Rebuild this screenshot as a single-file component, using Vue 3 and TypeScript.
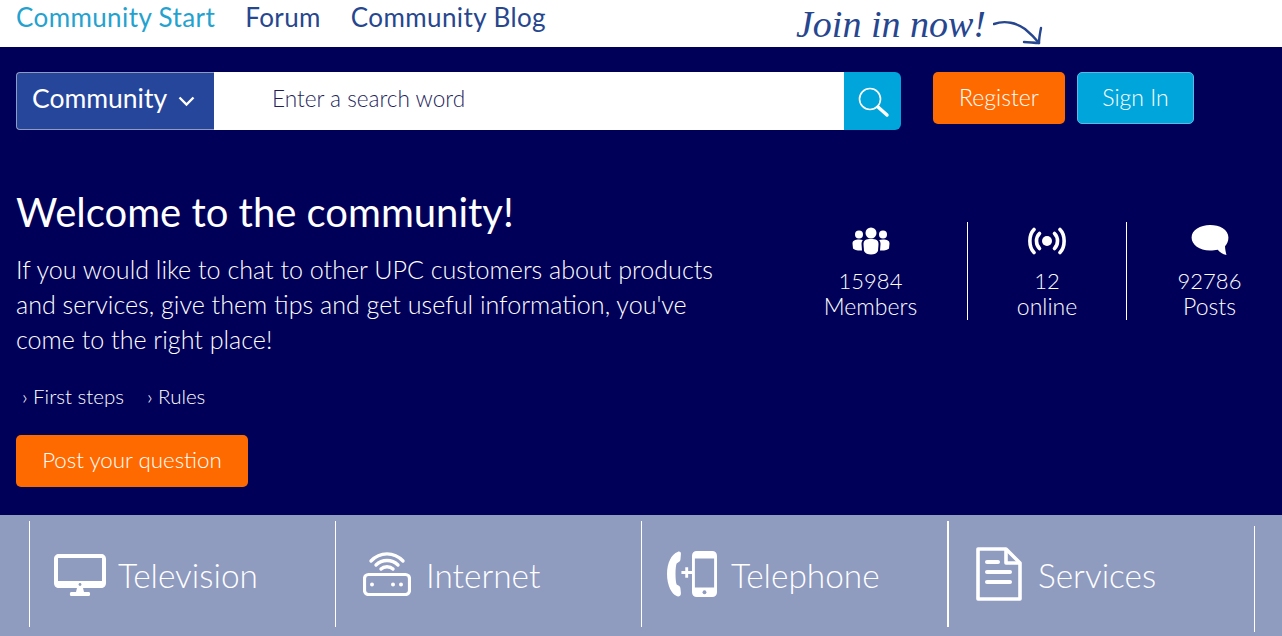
<template>
  <div class="page">
    <header class="topnav">
      <nav class="links">
        <a class="active">Community Start</a>
        <a>Forum</a>
        <a>Community Blog</a>
      </nav>
      <div class="join">
        <span class="join-text">Join in now!</span>
        <svg class="join-arrow" width="50" height="28" viewBox="0 0 50 28" fill="none" stroke="#26468f" stroke-width="2.4" stroke-linecap="round" stroke-linejoin="round">
          <path d="M1 5 C12 1 24 4 32 10 C38 15 42 19 46 24" />
          <path d="M48 9 C47 14 46 19 46 24 C41 24 36 23 31 23" />
        </svg>
      </div>
    </header>

    <main class="hero">
      <div class="search-row">
        <div class="search">
          <button class="scope">
            <span>Community</span>
            <svg width="17" height="11" viewBox="0 0 17 11" fill="none" stroke="#fff" stroke-width="2.400">
              <path d="M1.500 1.500 L8.500 8.500 L15.500 1.500" />
            </svg>
          </button>
          <div class="field">Enter a search word</div>
          <button class="go">
            <svg width="34" height="34" viewBox="0 0 34 34" fill="none" stroke="#fff">
              <circle cx="14" cy="14" r="10.500" stroke-width="1.600" />
              <path d="M22 22 L31 30" stroke-width="3.400" stroke-linecap="round" />
            </svg>
          </button>
        </div>
        <button class="btn orange register">Register</button>
        <button class="btn blue">Sign In</button>
      </div>

      <div class="intro">
        <section class="welcome">
          <h1>Welcome to the community!</h1>
          <p>If you would like to chat to other UPC customers about products and services, give them tips and get useful information, you've come to the right place!</p>
          <div class="steps">
            <a>› First steps</a>
            <a>› Rules</a>
          </div>
          <button class="btn orange ask">Post your question</button>
        </section>

        <section class="stats">
          <div class="stat members">
            <svg width="38" height="28" viewBox="0 0 38 28" fill="#fff">
              <circle cx="19" cy="6" r="5.500" />
              <path d="M11.500 17 C11.500 13 14 12 19 12 C24 12 26.500 13 26.500 17 L26 24 C25 26.500 22 27.500 19 27.500 C16 27.500 13 26.500 12 24 Z" />
              <circle cx="7" cy="7.500" r="4" />
              <path d="M0.500 16.500 C0.500 13.500 3 12.500 7 12.500 C8.500 12.500 9.800 12.700 10.800 13 C9.800 14.200 9.500 15.500 9.500 17 L10 23.500 C6 23.800 2 23 1 21.500 Z" />
              <circle cx="31" cy="7.500" r="4" />
              <path d="M37.500 16.500 C37.500 13.500 35 12.500 31 12.500 C29.500 12.500 28.200 12.700 27.200 13 C28.200 14.200 28.500 15.500 28.500 17 L28 23.500 C32 23.800 36 23 37 21.500 Z" />
            </svg>
            <span class="num">15984</span>
            <span>Members</span>
          </div>
          <div class="stat online">
            <svg width="38" height="28" viewBox="0 0 38 28" fill="none" stroke="#fff" stroke-width="3.600" stroke-linecap="round">
              <circle cx="19" cy="14" r="5" fill="#fff" stroke="none" />
              <path d="M11.500 6.500 C7.500 10.500 7.500 17.500 11.500 21.500" />
              <path d="M26.500 6.500 C30.500 10.500 30.500 17.500 26.500 21.500" />
              <path d="M6 2.500 C0.500 8 0.500 20 6 25.500" />
              <path d="M32 2.500 C37.500 8 37.500 20 32 25.500" />
            </svg>
            <span class="num">12</span>
            <span>online</span>
          </div>
          <div class="stat posts">
            <svg class="bubble" width="38" height="31" viewBox="0 0 38 32" fill="#fff">
              <path d="M19 0 C29 0 38 4.500 38 13 C38 17 36.500 20 34.500 22 C34.500 25 35.500 29 36 31 C32 30 29 28 27 25.500 C24.500 26 22 26.300 19 26.300 C8 26.300 0 20.500 0 13 C0 5 9 0 19 0 Z" />
            </svg>
            <span class="num">92786</span>
            <span>Posts</span>
          </div>
        </section>
      </div>
    </main>

    <footer class="topics">
      <a class="topic tv">
        <svg width="52" height="42" viewBox="0 0 52 42" fill="#fff">
          <path fill-rule="evenodd" d="M5 0 H47 C50 0 52 2 52 5 V29 C52 32 50 34 47 34 H5 C2 34 0 32 0 29 V5 C0 2 2 0 5 0 Z M4 4 V27 H48 V4 Z" />
          <circle cx="26" cy="30.500" r="1.400" fill="#8f9bbf" />
          <path d="M23 34 H29 L30 38 H35 C36.500 38 36.500 42 35 42 H17 C15.500 42 15.500 38 17 38 H22 Z" />
        </svg>
        <span>Television</span>
      </a>
      <a class="topic router">
        <svg width="48" height="44" viewBox="0 0 48 44" fill="none" stroke="#fff">
          <path d="M8 9 C17 -0.500 31 -0.500 40 9" stroke-width="3.400" stroke-linecap="round" />
          <path d="M13 13 C19 7 29 7 35 13" stroke-width="3.400" stroke-linecap="round" />
          <path d="M18 17 C21 14 27 14 30 17" stroke-width="3.400" stroke-linecap="round" />
          <rect x="1.500" y="22.500" width="45" height="20" rx="4" stroke-width="3.200" />
          <circle cx="9" cy="32.500" r="2" fill="#fff" stroke="none" />
          <circle cx="30" cy="32.500" r="2" fill="#fff" stroke="none" />
          <circle cx="38" cy="32.500" r="2" fill="#fff" stroke="none" />
        </svg>
        <span>Internet</span>
      </a>
      <a class="topic phone">
        <svg width="50" height="48" viewBox="0 0 52 48" fill="#fff">
          <path d="M11 1 C13 0 14.500 1 14.500 3 L14 9 C14 11 12 12 10 13 C8.500 17 8.500 30 10 35 C12 36 14 37 14 39 L14.500 44 C14.500 47 12 48 10 47 C5 45 0 36 0 24 C0 12 5 3 11 1 Z" />
          <path d="M20 23 H16 V20 H20 V16 H23 V20 H27 V23 H23 V27 H20 Z" transform="translate(-1 1)" />
          <path fill-rule="evenodd" d="M31 0 H47 C50 0 52 2 52 5 V43 C52 46 50 48 47 48 H31 C28 48 26 46 26 43 V5 C26 2 28 0 31 0 Z M29 8 V38 H49 V8 Z" />
          <circle cx="39" cy="43" r="2" fill="#8f9bbf" />
        </svg>
        <span>Telephone</span>
      </a>
      <a class="topic strong">
        <svg width="46" height="54" viewBox="0 0 46 54" fill="none" stroke="#fff" stroke-width="3.600" stroke-linejoin="round">
          <path d="M2 2 H30 L44 16 V52 H2 Z" />
          <path d="M30 2 V16 H44" />
          <path d="M11 15 H22" stroke-width="4" stroke-linecap="round" />
          <path d="M11 25 H34" stroke-width="4" stroke-linecap="round" />
          <path d="M11 35 H34" stroke-width="4" stroke-linecap="round" />
        </svg>
        <span>Services</span>
      </a>
      <div class="end"></div>
    </footer>
  </div>
</template>

<script setup lang="ts">
</script>

<style>
html,
body {
  margin: 0;
  overflow: hidden;
}
</style>

<style scoped>
.page {
  height: 636px;
  overflow: hidden;
  display: flex;
  flex-direction: column;
  font-family: Lato, "Open Sans", sans-serif;
  font-weight: 300;
  background: #000058;
  color: #fff;
}

button {
  font-family: inherit;
  font-weight: 300;
  cursor: pointer;
}

.topnav {
  height: 47px;
  flex-shrink: 0;
  background: #fff;
  display: flex;
  padding-left: 16px;
}

.links {
  display: flex;
  gap: 30px;
  width: 780px;
  font-size: 26px;
  font-weight: 400;
  letter-spacing: 0.4px;
  line-height: 35px;
  color: #26468f;
}

.links .active {
  color: #24a2cf;
}

.join {
  display: flex;
  align-items: flex-start;
  gap: 7px;
  padding-top: 2px;
}

.join-text {
  font-family: "Liberation Serif", serif;
  font-style: italic;
  font-size: 38px;
  line-height: 44px;
  color: #26468f;
}

.join-arrow {
  margin-top: 17px;
}

.hero {
  flex: 1;
  padding: 25px 0 0 16px;
}

.search-row {
  display: flex;
  align-items: flex-start;
}

.search {
  width: 885px;
  height: 58px;
  display: flex;
  margin-right: 32px;
}

.scope {
  width: 198px;
  border: 1px solid #8f9bbf;
  border-right: 0;
  border-radius: 4px 0 0 4px;
  background: #26469c;
  color: #fff;
  font-size: 26.500px;
  font-weight: 400;
  display: flex;
  align-items: center;
  gap: 11px;
  padding: 0 0 0 15px;
}

.scope span {
  padding-bottom: 6px;
}

.scope svg {
  flex-shrink: 0;
}

.field {
  flex: 1;
  background: #fff;
  color: #1f1f5c;
  font-size: 22.600px;
  line-height: 54px;
  padding-left: 58px;
}

.go {
  width: 57px;
  border: 0;
  border-radius: 0 6px 6px 0;
  background: #00a6db;
  padding: 4px 0 0 1px;
}

.btn {
  height: 52px;
  border: 0;
  border-radius: 5px;
  color: #fff;
  font-size: 23px;
  padding: 0 0 3px;
}

.orange {
  background: #ff6a00;
}

.blue {
  width: 117px;
  background: #00a6db;
  border: 1px solid #5cb8e6;
}

.register {
  width: 132px;
  margin-right: 12px;
}

.intro {
  display: flex;
}

.welcome {
  width: 791px;
  flex-shrink: 0;
  padding-top: 57px;
}

h1 {
  margin: 0;
  font-size: 40px;
  font-weight: 400;
  line-height: 50px;
}

p {
  margin: 15px 0 0;
  width: 720px;
  font-size: 25.100px;
  line-height: 35px;
}

.steps {
  display: flex;
  gap: 23px;
  margin: 24px 0 0 6px;
  font-size: 20.500px;
  line-height: 30px;
}

.ask {
  display: block;
  width: 232px;
  margin-top: 24px;
  font-size: 22.300px;
}

.stats {
  display: flex;
  flex-shrink: 0;
  padding-top: 92px;
}

.stat {
  height: 98px;
  flex-shrink: 0;
  box-sizing: border-box;
  display: flex;
  flex-direction: column;
  align-items: center;
  font-size: 23px;
  line-height: 25px;
}

.stat svg {
  margin-top: 5px;
  margin-bottom: 13px;
}

.stat .bubble {
  margin-top: 3px;
  margin-bottom: 12px;
}

.num {
  font-size: 22px;
  margin-bottom: 1px;
}

.members {
  width: 161px;
  padding-right: 33px;
  border-right: 1px solid #fff;
}

.online {
  width: 159px;
  border-right: 1px solid #fff;
}

.posts {
  width: 155px;
  padding-left: 10px;
}

.topics {
  height: 121px;
  flex-shrink: 0;
  background: #8f9bbf;
  display: grid;
  grid-template-columns: repeat(3, 306px) 307px 1px;
  padding-left: 29px;
}

.topic {
  margin-top: 6px;
  height: 106px;
  border-left: 1px solid #fff;
  display: flex;
  align-items: center;
  gap: 12px;
  padding-left: 24px;
  font-size: 33.400px;
  font-weight: 300;
  color: #fff;
}

.topic span {
  padding-top: 1px;
}

.topic svg {
  flex-shrink: 0;
}

.tv svg {
  margin-top: 2px;
}

.router {
  padding-left: 27px;
  gap: 15px;
}

.phone {
  padding-left: 25px;
  gap: 14px;
}

.topic.strong {
  border-left-width: 2px;
  padding-left: 27px;
  gap: 16px;
}

.end {
  margin-top: 11px;
  height: 106px;
  border-left: 1px solid #fff;
}
</style>
